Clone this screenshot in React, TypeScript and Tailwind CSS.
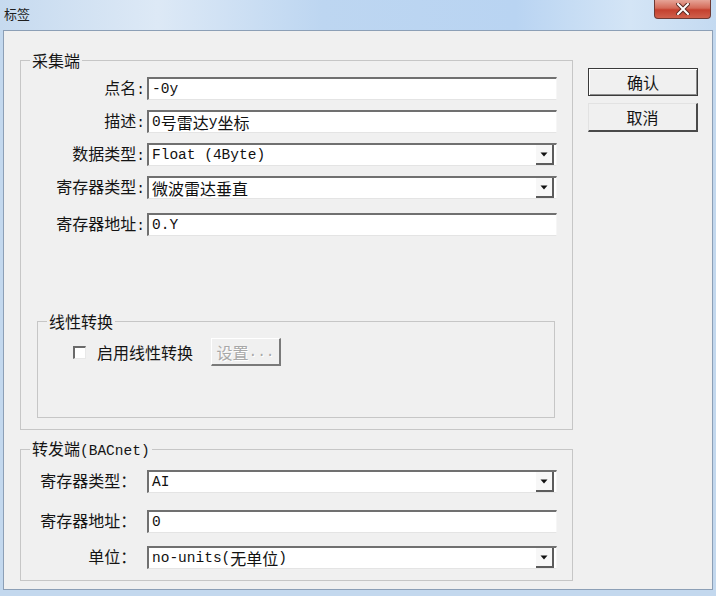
import React from "react";

const CJK = "font-['Noto_Sans_CJK_SC',sans-serif]";

function Mix({ text }: { text: string }) {
  const parts = text.split(/([\u0000-\u00ff]+)/).filter(Boolean);
  return (
    <>
      {parts.map((p, i) =>
        /^[\u0000-\u00ff]+$/.test(p) ? (
          <span key={i} className="font-['Liberation_Mono',monospace] text-[14.5px]">
            {p}
          </span>
        ) : (
          <span key={i} className="font-['Noto_Sans_CJK_SC',sans-serif] text-[16px]">
            {p}
          </span>
        )
      )}
    </>
  );
}

function Arrow() {
  return (
    <svg width="8" height="5" viewBox="0 0 8 5">
      <path d="M0.5 0.5 L7.5 0.5 L4 4.5 Z" fill="#111" />
    </svg>
  );
}

function TextBox({ value }: { value: string }) {
  return (
    <div className="w-[410px] h-[23px] bg-white border-t-2 border-l-2 border-b border-r border-t-[#707070] border-l-[#707070] border-b-[#e4e4e4] border-r-[#f6f6f6] flex items-center pl-[3px] leading-[20px] text-[#111] whitespace-pre">
      <Mix text={value} />
    </div>
  );
}

function Select({ value }: { value: string }) {
  return (
    <div className="w-[410px] h-[23px] bg-white border-t-2 border-l-2 border-b border-r border-t-[#707070] border-l-[#707070] border-b-[#e4e4e4] border-r-[#f6f6f6] flex items-center pl-[3px] leading-[20px] text-[#111] whitespace-pre">
      <Mix text={value} />
      <div className="ml-auto mr-[2px] w-[18px] h-[20px] bg-[#f7f7f7] border-r-2 border-b-2 border-r-[#5c5c5c] border-b-[#5c5c5c] flex items-center justify-center">
        <Arrow />
      </div>
    </div>
  );
}

function Row({
  label,
  children,
  className,
}: {
  label: string;
  children: React.ReactNode;
  className: string;
}) {
  return (
    <div className={"flex items-center " + className}>
      <div className="w-[124px] text-right leading-[20px] text-[#141414] whitespace-pre">
        <Mix text={label} />
      </div>
      <div className="ml-[2px]">{children}</div>
    </div>
  );
}

export default function App() {
  return (
    <div className="w-[716px] h-[596px] flex flex-col bg-[#c3d8ee] overflow-hidden">
      {/* title bar */}
      <div className="h-[30px] flex items-start justify-between bg-[linear-gradient(90deg,#c6daef_0%,#dde9f6_22%,#bdd6f1_45%,#b9d4f2_72%,#d4e5f6_88%,#c4daf1_100%)]">
        <div className={"pl-[4px] pt-[5px] text-[13px] leading-[18px] text-[#1e1e1e] " + CJK}>标签</div>
        <div className="mr-[5px] w-[57px] h-[19px] rounded-b-[4px] border border-t-0 border-[#6e3a34] bg-[linear-gradient(180deg,#e6a497_0%,#d46a58_45%,#c4402e_55%,#d0604c_100%)] flex items-center justify-center">
          <svg width="14" height="12" viewBox="0 0 14 12">
            <path d="M2 1 L12 11 M12 1 L2 11" stroke="#5a2a24" strokeWidth="4" strokeLinecap="square" />
            <path d="M2 1 L12 11 M12 1 L2 11" stroke="#ffffff" strokeWidth="2" strokeLinecap="square" />
          </svg>
        </div>
      </div>

      {/* client area */}
      <div className="ml-[3px] w-[710px] h-[560px] border border-[#8c9fb6] bg-[#f0f0f0] flex items-start pl-[16px] pt-[19px]">
        {/* left column */}
        <div className="w-[553px] flex flex-col">
          <fieldset className="border border-[#c6c6c6]">
            <legend className={"ml-[9px] px-[2px] leading-[20px] text-[16px] text-[#141414] " + CJK}>采集端</legend>
            <div className="h-[359px] flex flex-col pt-[7px]">
              <Row label="点名:" className="">
                <TextBox value="-0y" />
              </Row>
              <Row label="描述:" className="mt-[10px]">
                <TextBox value="0号雷达y坐标" />
              </Row>
              <Row label="数据类型:" className="mt-[10px]">
                <Select value="Float (4Byte)" />
              </Row>
              <Row label="寄存器类型:" className="mt-[10px]">
                <Select value="微波雷达垂直" />
              </Row>
              <Row label="寄存器地址:" className="mt-[14px]">
                <TextBox value="0.Y" />
              </Row>

              <fieldset className="mt-[75px] ml-[16px] w-[518px] border border-[#c6c6c6]">
                <legend className={"ml-[9px] px-[2px] leading-[20px] text-[16px] text-[#141414] " + CJK}>线性转换</legend>
                <div className="h-[86px] pt-[7px]">
                  <div className="flex items-center pl-[35px]">
                    <div className="w-[13px] h-[13px] bg-white border-t-2 border-l-2 border-t-[#6a6a6a] border-l-[#6a6a6a] border-b border-r border-b-[#e8e8e8] border-r-[#e8e8e8]" />
                    <div className={"ml-[11px] text-[16px] leading-[20px] text-[#141414] " + CJK}>启用线性转换</div>
                    <div className="ml-[18px] w-[70px] h-[28px] bg-[#f0f0f0] border-t border-l border-t-[#ffffff] border-l-[#ffffff] border-r-2 border-b-2 border-r-[#7a7a7a] border-b-[#7a7a7a] flex items-center justify-center text-[#a8a8a8] leading-[20px] [text-shadow:1px_1px_0_#fff]">
                      <Mix text="设置..." />
                    </div>
                  </div>
                </div>
              </fieldset>
            </div>
          </fieldset>

          <fieldset className="mt-[8px] border border-[#c6c6c6]">
            <legend className="ml-[9px] px-[2px] leading-[20px] text-[#141414] whitespace-pre">
              <Mix text="转发端(BACnet)" />
            </legend>
            <div className="h-[119px] flex flex-col">
              <Row label="寄存器类型： " className="mt-[9px]">
                <Select value="AI" />
              </Row>
              <Row label="寄存器地址： " className="mt-[17px]">
                <TextBox value="0" />
              </Row>
              <Row label="单位： " className="mt-[13px]">
                <Select value="no-units(无单位)" />
              </Row>
            </div>
          </fieldset>
        </div>

        {/* right column */}
        <div className="ml-[15px] w-[110px] mt-[18px] flex flex-col">
          <div className={"h-[28px] border border-[#3a3a3a] bg-[#f0f0f0] shadow-[inset_1px_1px_0_#ffffff,inset_-1px_-1px_0_#8c8c8c] flex items-center justify-center text-[16px] leading-[20px] text-[#141414] " + CJK}>
            确认
          </div>
          <div className={"mt-[7px] h-[29px] border-t border-l border-t-[#e2e2e2] border-l-[#e2e2e2] border-r-2 border-b-2 border-r-[#4a4a4a] border-b-[#4a4a4a] bg-[#f0f0f0] flex items-center justify-center text-[16px] leading-[20px] text-[#141414] " + CJK}>
            取消
          </div>
        </div>
      </div>
    </div>
  );
}
